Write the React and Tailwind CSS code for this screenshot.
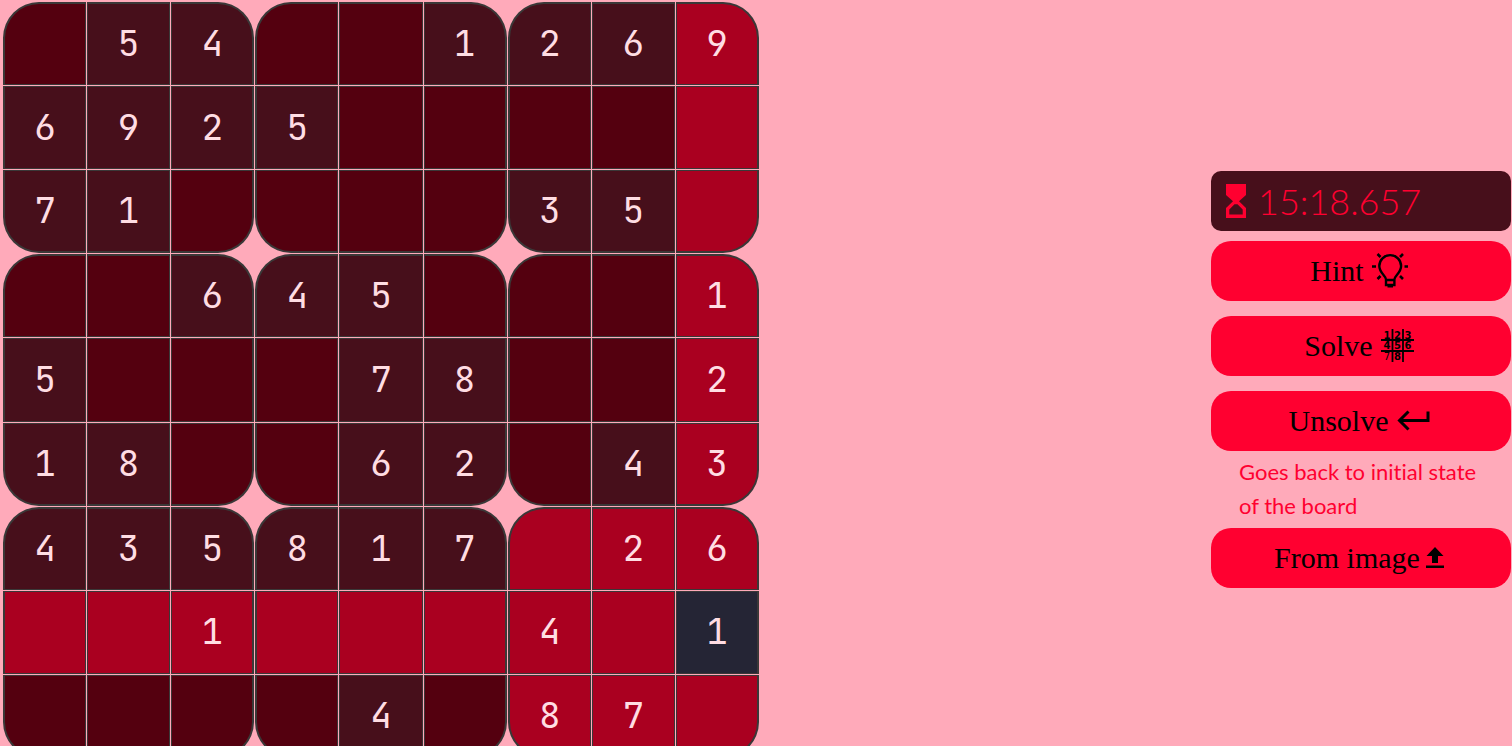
const ROWS = [
  ".54..1269",
  "6925.....",
  "71....35.",
  "..645...1",
  "5...78..2",
  "18..62.43",
  "435817.26",
  "..1...4.1",
  "....4.87.",
];

const SELECTED = { row: 7, col: 8 };
const BLOCKS = [0, 1, 2];
const CORNERS = {
  "0-0": "rounded-tl-[36px]",
  "0-2": "rounded-tr-[36px]",
  "2-0": "rounded-bl-[36px]",
  "2-2": "rounded-br-[36px]",
};

function isPeer(row, col) {
  const sameBlock =
    Math.floor(row / 3) === Math.floor(SELECTED.row / 3) &&
    Math.floor(col / 3) === Math.floor(SELECTED.col / 3);
  return row === SELECTED.row || col === SELECTED.col || sameBlock;
}

function cellColor(row, col, value) {
  if (row === SELECTED.row && col === SELECTED.col) return "bg-[#252535]";
  if (isPeer(row, col)) return "bg-[#aa0020]";
  return value ? "bg-[#470f1b]" : "bg-[#54000f]";
}

function Cell({ row, col }) {
  const value = ROWS[row][col] === "." ? "" : ROWS[row][col];
  const r = row % 3;
  const c = col % 3;
  const edges = `${r === 0 ? "border-t-2" : "border-t"} ${r === 2 ? "border-b-2" : "border-b"} ${c === 0 ? "border-l-2" : "border-l"} ${c === 2 ? "border-r-2" : "border-r"}`;
  return (
    <button
      type="button"
      aria-label={`Row ${row + 1}, column ${col + 1}`}
      className={`flex items-center justify-center border-[#3a3838] pb-0.5 leading-none ${edges} ${CORNERS[`${r}-${c}`] || ""} ${cellColor(row, col, value)}`}
    >
      {value}
    </button>
  );
}

function Block({ blockRow, blockCol }) {
  return (
    <div className="grid grid-cols-3 grid-rows-3 gap-px">
      {BLOCKS.map((r) =>
        BLOCKS.map((c) => (
          <Cell key={`${r}-${c}`} row={blockRow * 3 + r} col={blockCol * 3 + c} />
        )),
      )}
    </div>
  );
}

function HourglassIcon() {
  return (
    <svg viewBox="0 0 20 34" className="h-[34px] w-5" aria-hidden="true">
      <path fill="currentColor" fillRule="evenodd" d="M0 0h20v11L13 17.200 20 24V34H0V24L7 17.200 0 11zM3.300 25.500v5h13.400v-5L11.500 20.300h-3z" />
    </svg>
  );
}

function BulbIcon() {
  return (
    <svg viewBox="0 0 36 36" className="h-9 w-9" fill="none" stroke="currentColor" strokeWidth="2.400" aria-hidden="true">
      <path d="M14 26.500c0-4-6.700-6.500-6.700-13.500a10.900 10.900 0 0 1 21.800 0c0 7-6.700 9.500-6.700 13.500v5.500H14zM14 27h8.500" />
      <path d="M15.500 33h5.500" strokeWidth="3" />
      <path d="M0 13.500h4M32.500 13.500h4M5.500 1l3 3M31 1l-3 3M5.500 26l3-3M31 26l-3-3" strokeWidth="2.600" />
    </svg>
  );
}

function SudokuIcon() {
  const digits = ["1", "2", "3", "4", "5", "6", "7", "8"];
  return (
    <svg viewBox="0 0 33 33" className="h-[33px] w-[33px]" aria-hidden="true">
      <path d="M11.500 0v33M22 0v33M0 11h33M0 22h33" stroke="currentColor" strokeWidth="1.800" />
      {digits.map((digit, i) => (
        <text
          key={digit}
          x={6 + (i % 3) * 10.5}
          y={9.5 + Math.floor(i / 3) * 10.5}
          textAnchor="middle"
          fontFamily="DejaVu Sans"
          fontSize="10"
          fontWeight={digit === "7" ? 400 : 700}
          fill="currentColor"
        >
          {digit}
        </text>
      ))}
    </svg>
  );
}

function ReturnIcon() {
  return (
    <svg viewBox="0 0 33 22" className="h-[22px] w-[33px]" fill="none" stroke="currentColor" strokeWidth="3" aria-hidden="true">
      <path d="M11.500 1.500L2.500 10.500l9 9M3 10.500h28V1.500" />
    </svg>
  );
}

function UploadIcon() {
  return (
    <svg viewBox="0 0 18 21" className="h-[21px] w-[18px]" aria-hidden="true">
      <path fill="currentColor" d="M9 0l8.500 9H12v7H6V9H.5zM0 18.500h18V21H0z" />
    </svg>
  );
}

function ActionButton({ children, className = "gap-2" }) {
  return (
    <button
      type="button"
      className={`flex h-[60px] w-full items-center justify-center rounded-[20px] bg-[#ff0030] pr-1 text-[30px] text-black ${className}`}
    >
      {children}
    </button>
  );
}

export default function App() {
  return (
    <main className="flex h-screen items-start justify-between overflow-hidden bg-[#ffaaba] pt-0.5 pr-px pl-[3px] font-['Liberation_Serif',serif]">
      <div className="grid aspect-square w-[756px] shrink-0 grid-cols-3 grid-rows-3 gap-px font-['JetBrains_Mono','DejaVu_Sans_Mono',monospace] text-4xl text-[#ffdde3]">
        {BLOCKS.map((r) =>
          BLOCKS.map((c) => <Block key={`${r}-${c}`} blockRow={r} blockCol={c} />),
        )}
      </div>

      <aside className="flex w-[300px] flex-col self-center pt-2.5">
        <div className="mb-2.5 flex h-[60px] items-center gap-3 rounded-[10px] bg-[#470f1b] px-[15px] font-[Lato,sans-serif] text-4xl leading-none font-light text-[#ff0030]">
          <HourglassIcon />
          <time>15:18.657</time>
        </div>
        <div className="flex flex-col gap-[15px]">
          <ActionButton>
            Hint <BulbIcon />
          </ActionButton>
          <ActionButton>
            Solve <SudokuIcon />
          </ActionButton>
          <ActionButton>
            Unsolve <ReturnIcon />
          </ActionButton>
        </div>
        <p className="px-7 pt-1 pb-[5px] font-[Lato,sans-serif] text-[22px] leading-[34px] text-[#ff0030] [font-variant-ligatures:none]">
          Goes back to initial state of the board
        </p>
        <ActionButton className="gap-1.5">
          From image
          <UploadIcon />
        </ActionButton>
      </aside>
    </main>
  );
}
